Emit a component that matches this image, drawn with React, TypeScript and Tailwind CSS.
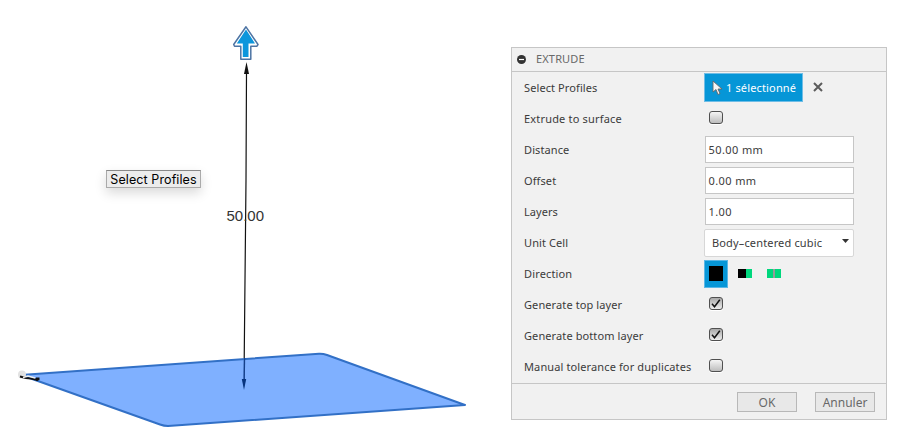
import type { ReactNode } from 'react';

function Row({ label, spacing, children }: { label: string; spacing: string; children: ReactNode }) {
  return (
    <div className="flex h-[31px] items-center pl-3">
      <span className={`w-[180px] shrink-0 whitespace-nowrap pb-px ${spacing}`}>{label}</span>
      {children}
    </div>
  );
}

function Field({ value }: { value: string }) {
  return (
    <div className="ml-px flex h-[27px] w-[149px] items-center border border-[#c6c6c6] bg-white pb-px pl-[2.5px] tracking-[0.4px]">
      {value}
    </div>
  );
}

function Check({ checked = false }: { checked?: boolean }) {
  return (
    <div
      className={`mb-[2px] ml-[5px] h-[13px] w-[14px] rounded-[3px] border border-[#505050] bg-gradient-to-b shadow-[0_1px_0_#fff] ${
        checked ? 'from-[#a9a9a9] to-[#ededed]' : 'from-[#f5f5f5] to-[#bdbdbd]'
      }`}
    >
      {checked && (
        <svg className="block" width="12" height="11" viewBox="0 0 12 11" fill="none">
          <path d="M2 5.8 4.5 8.7 9.8 1.8" stroke="#111" strokeWidth="1.5" />
        </svg>
      )}
    </div>
  );
}

function Scene() {
  return (
    <div className="relative h-[436px] w-[511px] shrink-0">
      <svg className="block" width="511" height="436" viewBox="0 0 511 436">
        <path d="M246.500 72 246 180 244 380" fill="none" stroke="#111" strokeWidth="1.2" />
        <path d="M246.500 62 249 74H244Z" fill="#111" />
        <path
          d="M21 375 319 353.700Q323 353.500 327 355L465 405 168 426Q164 426 160 424.500Z"
          fill="#498fff"
          fillOpacity=".7"
          stroke="#3270c6"
          strokeWidth="2"
          strokeLinejoin="round"
        />
        <path d="M244.600 358 244.200 382" stroke="#153f89" strokeWidth="1.2" />
        <path d="M241.800 379H246.200L244 390Z" fill="#07347f" />
        <circle cx="22" cy="374.500" r="4" fill="#e2e2e2" />
        <path d="M20 376.500 26 378 31 378.500 38 380" fill="none" stroke="#111" strokeWidth="2" />
        <path d="M23 377.500 28 376 35 378" fill="none" stroke="#eee" strokeWidth="1.500" />
        <path d="M36 377.500H39.500V380L36 381Z" fill="#111" />
        <path
          d="M246 26.800 258 44.500 257 46.200H250.800V59.300H240.800V46.200H234.500L233.700 44.500Z"
          fill="white"
          stroke="#4d74a4"
          strokeWidth="1.500"
          strokeLinejoin="round"
        />
        <path d="M246 29.500 255 43.500H248.500V57H242.800V43.500H236.800Z" fill="#0c96dc" />
        <text
          x="226.500"
          y="221"
          textLength="37.500"
          fill="#333"
          className="font-['Liberation_Sans',sans-serif] text-[15px]"
        >
          50.00
        </text>
      </svg>
      <div className="absolute left-[106px] top-[170px] flex h-[18px] w-[95px] items-center justify-center whitespace-nowrap border border-[#aaa] border-t-[#888] bg-[#ececec] font-['Inter',sans-serif] text-[12.5px] tracking-[0.1px] text-black shadow-[0_5px_12px_rgba(0,0,0,0.15)]">
        Select Profiles
      </div>
    </div>
  );
}

export default function App() {
  return (
    <main className="flex h-[436px] w-[906px] overflow-hidden bg-white font-['Noto_Sans',sans-serif] text-[11px] leading-[15px] text-[#3b3b3b]">
      <Scene />
      <section className="mt-[47px] flex h-[373px] w-[376px] flex-col border border-[#c6c6c6] bg-[#f1f1f1]">
        <header className="flex h-6 shrink-0 items-center border-b border-[#c6c6c6] pl-[5px] text-[#686868]">
          <svg width="9" height="9" viewBox="0 0 9 9">
            <circle cx="4.500" cy="4.500" r="4.500" fill="#333" />
            <path d="M2 4.500H7" stroke="white" strokeWidth="1.200" />
          </svg>
          <span className="ml-[10px] pb-[2px] tracking-[0.15px]">EXTRUDE</span>
        </header>
        <div className="h-[311px] shrink-0">
          <Row label="Select Profiles" spacing="tracking-[0.1px]">
            <button className="flex h-[29px] w-[99px] items-center border border-[#6fbde6] bg-[#0696d7] pl-[7px] text-white">
              <svg width="11" height="16" viewBox="0 0 11 16">
                <path d="M1 1V12L4 9.500 6 14.500 8 13.500 6 9H10Z" fill="#f6f6f6" stroke="#666" strokeWidth=".9" />
              </svg>
              <span className="ml-[3px] whitespace-nowrap tracking-[0.15px]">1 sélectionné</span>
            </button>
            <svg className="ml-[10px] mb-px" width="10" height="10" viewBox="0 0 10 10">
              <path d="M1 1 9 9M9 1 1 9" stroke="#5c5c5c" strokeWidth="2" />
            </svg>
          </Row>
          <Row label="Extrude to surface" spacing="tracking-[0.18px]"><Check /></Row>
          <Row label="Distance" spacing="tracking-[0.1px]"><Field value="50.00 mm" /></Row>
          <Row label="Offset" spacing="tracking-[0.1px]"><Field value="0.00 mm" /></Row>
          <Row label="Layers" spacing="tracking-[0.05px]"><Field value="1.00" /></Row>
          <Row label="Unit Cell" spacing="tracking-[0.1px]">
            <div className="flex h-7 w-[150px] items-center justify-between rounded-[2px] border border-[#d7d7d7] bg-white pl-[7px] pr-[4px]">
              <span className="tracking-[0.15px]">Body–centered cubic</span>
              <svg className="mb-[3px]" width="7" height="4" viewBox="0 0 7 4"><path d="M0 0H7L3.500 4Z" fill="#333" /></svg>
            </div>
          </Row>
          <Row label="Direction" spacing="tracking-[0.15px]">
            <div className="flex h-7 w-6 items-center justify-center border border-[#5bb7e6] bg-[#0696d7]">
              <div className="h-[15px] w-[14px] bg-black" />
            </div>
            <div className="mb-px ml-[10px] flex h-[9px] w-[14px]">
              <div className="w-2 bg-black" />
              <div className="w-1.5 bg-[#00d77d]" />
            </div>
            <div className="ml-[15px] flex h-[9px] w-[14px] bg-[#00d77d] pl-1.5">
              <div className="w-0.5 bg-[#999]" />
            </div>
          </Row>
          <Row label="Generate top layer" spacing="tracking-[0.1px]"><Check checked /></Row>
          <Row label="Generate bottom layer" spacing="tracking-[0.1px]"><Check checked /></Row>
          <Row label="Manual tolerance for duplicates" spacing="tracking-[0.12px]"><Check /></Row>
        </div>
        <footer className="flex flex-1 items-center justify-end gap-[18px] border-t border-[#c6c6c6] pr-[11px] text-[12px] text-[#686868]">
          <button className="h-5 w-[60px] border border-[#b8b8b8] bg-[#e8e8e8] pt-px">OK</button>
          <button className="h-5 w-[60px] border border-[#b8b8b8] bg-[#e8e8e8] pt-px">Annuler</button>
        </footer>
      </section>
    </main>
  );
}
